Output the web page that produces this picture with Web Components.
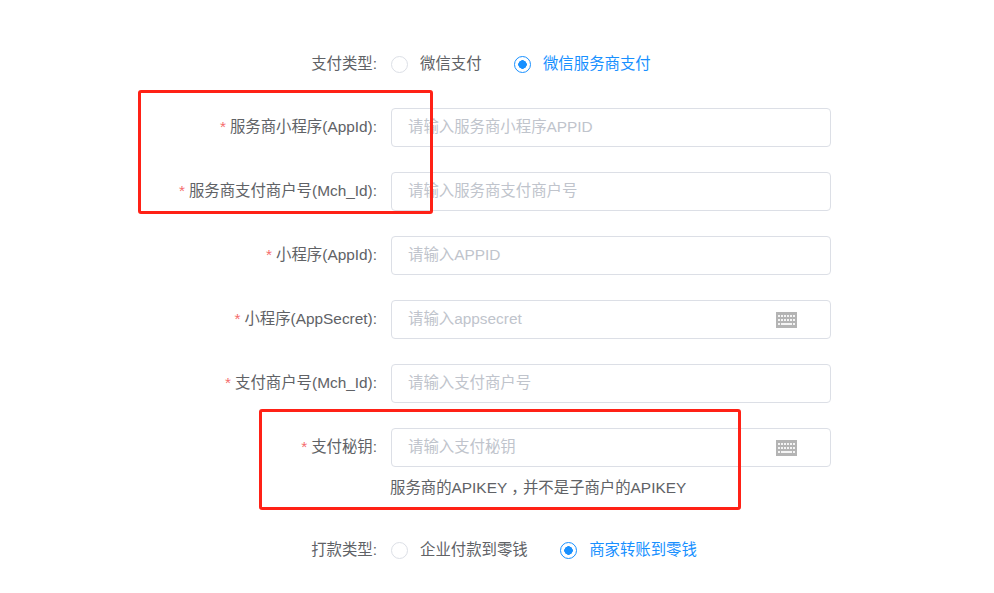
<!DOCTYPE html>
<html lang="zh-CN">
<head>
<meta charset="utf-8">
<title>支付配置</title>
<style>
  html, body { margin: 0; background: #fff; }
  body {
    font-family: "Liberation Sans", "Noto Sans CJK SC", sans-serif;
    font-size: 15.4px;
    color: #606266;
  }
</style>
</head>
<body>
<pay-form>
  <form-row label="支付类型:" plain>
    <radio-option>微信支付</radio-option>
    <radio-option checked>微信服务商支付</radio-option>
  </form-row>
  <form-row label="服务商小程序(AppId):" required>
    <text-field placeholder="请输入服务商小程序APPID"></text-field>
  </form-row>
  <form-row label="服务商支付商户号(Mch_Id):" required>
    <text-field placeholder="请输入服务商支付商户号"></text-field>
  </form-row>
  <form-row label="小程序(AppId):" required>
    <text-field placeholder="请输入APPID"></text-field>
  </form-row>
  <form-row label="小程序(AppSecret):" required>
    <text-field placeholder="请输入appsecret" keyboard></text-field>
  </form-row>
  <form-row label="支付商户号(Mch_Id):" required>
    <text-field placeholder="请输入支付商户号"></text-field>
  </form-row>
  <form-row label="支付秘钥:" required>
    <text-field placeholder="请输入支付秘钥" keyboard></text-field>
    <span slot="hint">服务商的APIKEY<span style="margin:0 4px;font-feature-settings:'halt'">，</span>并不是子商户的APIKEY</span>
  </form-row>
  <form-row label="打款类型:" plain>
    <radio-option>企业付款到零钱</radio-option>
    <radio-option checked>商家转账到零钱</radio-option>
  </form-row>
  <mark-box style="left:138px;top:90px;width:289px;height:118px"></mark-box>
  <mark-box style="left:259px;top:409px;width:476px;height:95px"></mark-box>
</pay-form>

<script>
class PayForm extends HTMLElement {
  constructor() {
    super();
    const shadow = this.attachShadow({ mode: 'open' });
    shadow.innerHTML = `
      <style>
        :host {
          display: flex;
          flex-direction: column;
          gap: 24px;
          position: relative;
          box-sizing: border-box;
          height: 593px;
          padding-top: 44px;
          overflow: hidden;
        }
      </style>
      <slot></slot>
    `;
  }
}

class FormRow extends HTMLElement {
  constructor() {
    super();
    const shadow = this.attachShadow({ mode: 'open' });
    const hasHint = this.querySelector('[slot="hint"]');
    shadow.innerHTML = `
      <style>
        :host {
          display: grid;
          grid-template-columns: 391px 440px;
        }
        .label {
          height: 40px;
          line-height: 38px;
          padding-right: 14px;
          text-align: right;
          white-space: nowrap;
        }
        :host([plain]) .label { line-height: 40px; }
        :host([required]) .label::before {
          content: "*";
          color: #f56c6c;
          margin-right: 4px;
        }
        .control {
          display: flex;
          align-items: center;
          height: 40px;
          line-height: 20px;
        }
        .hint {
          grid-column: 2;
          height: 38px;
          line-height: 39px;
          margin-left: -1px;
          white-space: nowrap;
        }
      </style>
      <div class="label">${this.getAttribute('label')}</div>
      <div class="control"><slot></slot></div>
      ${hasHint ? '<div class="hint"><slot name="hint"></slot></div>' : ''}
    `;
  }
}

class TextField extends HTMLElement {
  constructor() {
    super();
    const shadow = this.attachShadow({ mode: 'open' });
    const icon = this.hasAttribute('keyboard') ? `
      <svg width="21" height="16" viewBox="0 0 21 16">
        <rect width="21" height="16" fill="#b4b4b4"/>
        <path fill="#f4f4f4" d="M2 3h2v2H2zM5 3h2v2H5zM8 3h2v2H8zM11 3h2v2h-2zM14 3h2v2h-2zM17 3h2v2h-2zM2 7h2v2H2zM5 7h2v2H5zM8 7h2v2H8zM11 7h2v2h-2zM14 7h2v2h-2zM17 7h2v2h-2zM2 11h2v2H2zM5 11h11v2H5zM17 11h2v2h-2z"/>
      </svg>` : '';
    shadow.innerHTML = `
      <style>
        :host {
          display: flex;
          align-items: center;
          justify-content: space-between;
          box-sizing: border-box;
          width: 440px;
          height: 39px;
          padding: 0 33px 0 16px;
          margin-top: -1px;
          border: 1px solid #dcdfe6;
          border-radius: 4px;
          background: #fff;
        }
        .placeholder {
          color: #c0c4cc;
          white-space: nowrap;
          padding-bottom: 2px;
        }
        svg { display: block; }
      </style>
      <span class="placeholder">${this.getAttribute('placeholder')}</span>
      ${icon}
    `;
  }
}

class RadioOption extends HTMLElement {
  constructor() {
    super();
    const shadow = this.attachShadow({ mode: 'open' });
    shadow.innerHTML = `
      <style>
        :host {
          display: inline-flex;
          align-items: center;
          gap: 12px;
          margin-right: 32.4px;
          white-space: nowrap;
        }
        :host([checked]) { color: #1890ff; }
        .dot {
          box-sizing: border-box;
          width: 17px;
          height: 17px;
          border: 1px solid #dcdfe6;
          border-radius: 50%;
          background: #fff;
        }
        :host([checked]) .dot {
          border: 1.5px solid #1890ff;
          background: radial-gradient(circle, #1890ff 0 4px, #fff 4.5px);
        }
      </style>
      <span class="dot"></span>
      <slot></slot>
    `;
  }
}

// red annotation frames lying over the form
class MarkBox extends HTMLElement {
  constructor() {
    super();
    const shadow = this.attachShadow({ mode: 'open' });
    shadow.innerHTML = `
      <style>
        :host {
          display: block;
          position: absolute;
          border: 3px solid #ff2116;
          border-radius: 3px;
          pointer-events: none;
        }
      </style>
    `;
  }
}

customElements.define('pay-form', PayForm);
customElements.define('form-row', FormRow);
customElements.define('text-field', TextField);
customElements.define('radio-option', RadioOption);
customElements.define('mark-box', MarkBox);
</script>
</body>
</html>
